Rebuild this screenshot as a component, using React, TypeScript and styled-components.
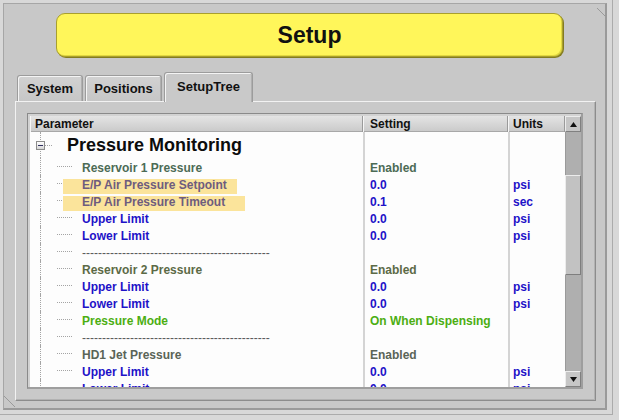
import React from 'react';
import styled, { createGlobalStyle, css } from 'styled-components';

const GlobalStyle = createGlobalStyle`
  html, body { margin: 0; padding: 0; background: #d8d8d8; }
  body { font-family: "Liberation Sans", Arial, sans-serif; }
  * { box-sizing: border-box; }
`;

const C = {
  blue: '#1e12c8',
  teal: '#4c6b55',
  olive: '#5c6a46',
  gray: '#5a6457',
  mauve: '#6e5c7e',
  green: '#4cae12',
  dash: '#5a5a5a',
};

const Window = styled.div`
  width: 619px;
  height: 420px;
  padding: 3px 12px 10px 3px;
  background: #d8d8d8;
  box-shadow: inset -6px -5px 0 #d8d8d8, inset -7px -6px 0 #ababab;
  display: flex;
`;

const Frame = styled.div`
  position: relative;
  flex: 1;
  display: flex;
  flex-direction: column;
  background: #c8c8c8;
  border-style: solid;
  border-width: 1px 2px 2px 1px;
  border-color: #a6a6a6 #9a9a9a #9a9a9a #a6a6a6;

  &::before,
  &::after {
    content: '';
    position: absolute;
    background: linear-gradient(
      45deg,
      transparent calc(50% - 0.7px),
      #9a9a9a calc(50% - 0.7px),
      #9a9a9a calc(50% + 0.7px),
      transparent calc(50% + 0.7px)
    );
  }
  &::before { top: 4px; right: 0; width: 8px; height: 8px; }
  &::after { bottom: 1px; left: 0; width: 11px; height: 11px; }
`;

const TitleBar = styled.div`
  margin: 9px 0 0 52px;
  width: 507px;
  height: 44px;
  border-radius: 9px;
  background: #fff65a;
  border: 1px solid #a89f2e;
  box-shadow: 1px 1px 0 #847c1e, inset -1px -1px 0 #e2d83e;
  display: flex;
  align-items: center;
  justify-content: center;
  font-size: 23px;
  font-weight: bold;
  color: #111;
`;

const TabRow = styled.div`
  margin: 15px 0 0 13px;
  height: 29px;
  display: flex;
  align-items: flex-end;
  gap: 2px;
  position: relative;
  z-index: 2;
`;

const Tab = styled.div<{ $active?: boolean; $w: number }>`
  width: ${p => p.$w}px;
  height: ${p => (p.$active ? 30 : 26)}px;
  margin-bottom: ${p => (p.$active ? -1 : 0)}px;
  padding-bottom: ${p => (p.$active ? 3 : 0)}px;
  border: 1px solid #9c9c9c;
  border-bottom: none;
  border-radius: 3px 3px 0 0;
  background: ${p => (p.$active ? '#c9c9c9' : 'linear-gradient(#d2d2d2, #c6c6c6)')};
  box-shadow: inset 1px 1px 0 #f4f4f4, inset -1px 0 0 #b0b0b0;
  display: flex;
  align-items: center;
  justify-content: center;
  font-size: 13px;
  font-weight: bold;
  color: #111;
`;

const Panel = styled.div`
  margin-left: 11px;
  width: 581px;
  height: 300px;
  padding: 11px 0 0 11px;
  background: #c9c9c9;
  border: 1px solid;
  border-color: #f2f2f2 #8c8c8c #8c8c8c #f2f2f2;
  box-shadow: inset -1px -1px 0 #b2b2b2;
`;

const Table = styled.div`
  width: 556px;
  height: 276px;
  border-style: solid;
  border-width: 1px 2px 2px 1px;
  border-color: #8a8a8a #9e9e9e #9e9e9e #8a8a8a;
  padding: 2px 0 0 2px;
  background: #d2d2d2;
  display: flex;
  flex-direction: column;
`;

const HeaderRow = styled.div`
  display: grid;
  grid-template-columns: 333px 145px 57px 16px;
  height: 16px;
`;

const HeaderCell = styled.div<{ $pad: number }>`
  padding-left: ${p => p.$pad}px;
  font-size: 12px;
  font-weight: bold;
  line-height: 16px;
  color: #111;
  background: linear-gradient(#e4e4e4, #c9c9c9);
  border-right: 1px solid #9a9a9a;
  box-shadow: inset 1px 0 0 #f6f6f6, inset 0 -1px 0 #a8a8a8;
  white-space: nowrap;
`;

const ScrollButton = styled.div`
  width: 16px;
  height: 16px;
  display: flex;
  align-items: center;
  justify-content: center;
  background: #c6c6c6;
  border-style: solid;
  border-width: 1px;
  border-color: #ececec #808080 #808080 #ececec;
`;

const Body = styled.div`
  display: flex;
  height: 255px;
`;

const Rows = styled.div`
  flex: 1;
  background: #fdfdfd;
  overflow: hidden;
`;

const Row = styled.div<{ $h?: number }>`
  display: grid;
  grid-template-columns: 333px 145px 57px;
  height: ${p => p.$h ?? 17}px;
`;

const treeLine = css`
  &::before {
    content: '';
    position: absolute;
    left: 10px;
    top: 0;
    bottom: 0;
    border-left: 1px dotted #a4a4a4;
  }
`;

const ParamCell = styled.div<{ $branch?: boolean }>`
  position: relative;
  padding-left: 52px;
  white-space: nowrap;
  ${treeLine}
  ${p =>
    p.$branch &&
    css`
      &::after {
        content: '';
        position: absolute;
        left: 27px;
        width: 15px;
        top: 8px;
        border-top: 1px dotted #a4a4a4;
      }
    `}
`;

const GroupCell = styled.div`
  position: relative;
  display: flex;
  align-items: center;
  padding-left: 6px;
  ${treeLine}
`;

const Expander = styled.div`
  position: relative;
  z-index: 1;
  width: 9px;
  height: 9px;
  margin-top: 1px;
  border: 1px solid #8c8c8c;
  background: linear-gradient(#ffffff, #d6d6d6);
  display: flex;
  align-items: center;
  justify-content: center;

  &::before {
    content: '';
    width: 5px;
    height: 1px;
    background: #303060;
  }
`;

const Branch = styled.div`
  width: 7px;
  margin-top: 1px;
  border-top: 1px dotted #a4a4a4;
`;

const Heading = styled.div`
  margin-left: 15px;
  font-size: 18px;
  font-weight: bold;
  line-height: 26px;
  color: #0c0c0c;
`;

const Label = styled.span<{ $c: string; $hl?: number; $thin?: boolean }>`
  position: relative;
  z-index: 1;
  display: inline-block;
  font-size: 12px;
  font-weight: ${p => (p.$thin ? 'normal' : 'bold')};
  line-height: 17px;
  color: ${p => p.$c};
  ${p =>
    p.$hl &&
    css`
      margin-left: -19px;
      padding-left: 19px;
      width: ${p.$hl}px;
      background: linear-gradient(to bottom, transparent 2px, #fbe49b 2px);
    `}
`;

const ValueCell = styled.div<{ $pad: number }>`
  border-left: 2px solid #d4d4d4;
  padding-left: ${p => p.$pad}px;
  white-space: nowrap;
`;

const Scrollbar = styled.div`
  width: 16px;
  display: flex;
  flex-direction: column;
`;

const Track = styled.div<{ $h?: number }>`
  ${p => (p.$h ? `height: ${p.$h}px;` : 'flex: 1;')}
  background: #afafaf;
  box-shadow: inset 1px 0 0 #9a9a9a;
`;

const Thumb = styled.div`
  height: 100px;
  background: #c2c2c2;
  border-style: solid;
  border-width: 1px;
  border-color: #ececec #7e7e7e #7e7e7e #ececec;
`;

const Arrow = ({ down }: { down?: boolean }) => (
  <svg width="7" height="5" viewBox="0 0 7 5">
    <polygon points={down ? '0,0 7,0 3.5,5' : '3.5,0 7,5 0,5'} fill="#111" />
  </svg>
);

type Item =
  | { kind: 'dash' }
  | { kind: 'item'; p: string; pc: string; s: string; sc: string; u?: string; hl?: number };

const it = (p: string, pc: string, s: string, sc: string, u?: string, hl?: number): Item => ({
  kind: 'item', p, pc, s, sc, u, hl,
});

const items: Item[] = [
  it('Reservoir 1 Pressure', C.teal, 'Enabled', C.teal),
  it('E/P Air Pressure Setpoint', C.mauve, '0.0', C.blue, 'psi', 174),
  it('E/P Air Pressure Timeout', C.mauve, '0.1', C.blue, 'sec', 182),
  it('Upper Limit', C.blue, '0.0', C.blue, 'psi'),
  it('Lower Limit', C.blue, '0.0', C.blue, 'psi'),
  { kind: 'dash' },
  it('Reservoir 2 Pressure', C.olive, 'Enabled', C.olive),
  it('Upper Limit', C.blue, '0.0', C.blue, 'psi'),
  it('Lower Limit', C.blue, '0.0', C.blue, 'psi'),
  it('Pressure Mode', C.green, 'On When Dispensing', C.green),
  { kind: 'dash' },
  it('HD1 Jet Pressure', C.gray, 'Enabled', C.gray),
  it('Upper Limit', C.blue, '0.0', C.blue, 'psi'),
  it('Lower Limit', C.blue, '0.0', C.blue, 'psi'),
];

export default function App() {
  return (
    <>
      <GlobalStyle />
      <Window>
        <Frame>
          <TitleBar>Setup</TitleBar>
          <TabRow>
            <Tab $w={66}>System</Tab>
            <Tab $w={77}>Positions</Tab>
            <Tab $w={89} $active>SetupTree</Tab>
          </TabRow>
          <Panel>
            <Table>
              <HeaderRow>
                <HeaderCell $pad={5}>Parameter</HeaderCell>
                <HeaderCell $pad={7}>Setting</HeaderCell>
                <HeaderCell $pad={5}>Units</HeaderCell>
                <ScrollButton>
                  <Arrow />
                </ScrollButton>
              </HeaderRow>
              <Body>
                <Rows>
                  <Row $h={26}>
                    <GroupCell>
                      <Expander />
                      <Branch />
                      <Heading>Pressure Monitoring</Heading>
                    </GroupCell>
                    <ValueCell $pad={5} />
                    <ValueCell $pad={3} />
                  </Row>
                  {items.map((r, i) =>
                    r.kind === 'dash' ? (
                      <Row key={i}>
                        <ParamCell $branch>
                          <Label $c={C.dash} $thin>
                            {'-'.repeat(47)}
                          </Label>
                        </ParamCell>
                        <ValueCell $pad={5} />
                        <ValueCell $pad={3} />
                      </Row>
                    ) : (
                      <Row key={i}>
                        <ParamCell $branch>
                          <Label $c={r.pc} $hl={r.hl}>
                            {r.p}
                          </Label>
                        </ParamCell>
                        <ValueCell $pad={5}>
                          <Label $c={r.sc}>{r.s}</Label>
                        </ValueCell>
                        <ValueCell $pad={3}>
                          {r.u && <Label $c={C.blue}>{r.u}</Label>}
                        </ValueCell>
                      </Row>
                    )
                  )}
                </Rows>
                <Scrollbar>
                  <Track $h={43} />
                  <Thumb />
                  <Track />
                  <ScrollButton>
                    <Arrow down />
                  </ScrollButton>
                </Scrollbar>
              </Body>
            </Table>
          </Panel>
        </Frame>
      </Window>
    </>
  );
}
